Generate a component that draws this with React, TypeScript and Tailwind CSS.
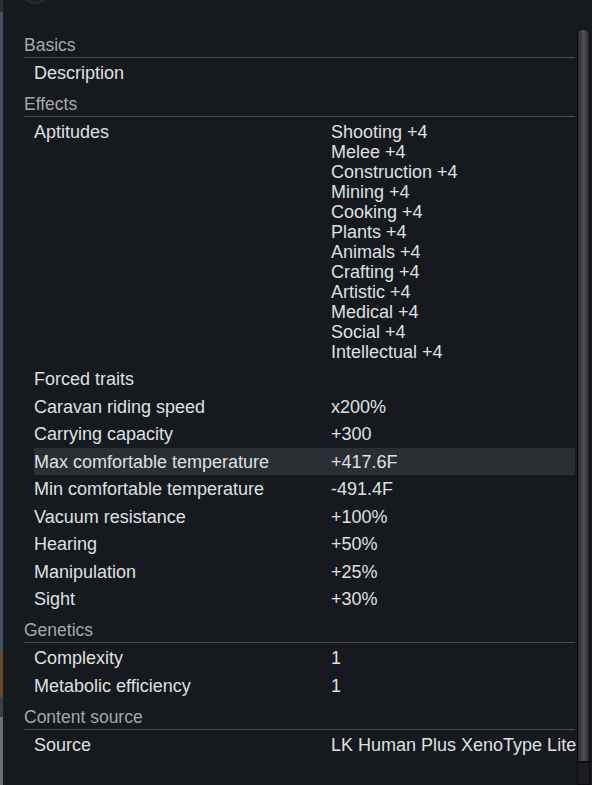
const aptitudes = [
  'Shooting +4',
  'Melee +4',
  'Construction +4',
  'Mining +4',
  'Cooking +4',
  'Plants +4',
  'Animals +4',
  'Crafting +4',
  'Artistic +4',
  'Medical +4',
  'Social +4',
  'Intellectual +4',
]

type Stat = { label: string; value?: string; highlight?: boolean }

const effectStats: Stat[] = [
  { label: 'Forced traits' },
  { label: 'Caravan riding speed', value: 'x200%' },
  { label: 'Carrying capacity', value: '+300' },
  { label: 'Max comfortable temperature', value: '+417.6F', highlight: true },
  { label: 'Min comfortable temperature', value: '-491.4F' },
  { label: 'Vacuum resistance', value: '+100%' },
  { label: 'Hearing', value: '+50%' },
  { label: 'Manipulation', value: '+25%' },
  { label: 'Sight', value: '+30%' },
]

function SectionHeader({ title }: { title: string }) {
  return (
    <div className="h-[31.5px] pt-[6.25px]">
      <div className="border-b border-[#4b4d51] pb-[1px] text-[17.5px] leading-[22px] text-[#a6a8ab]">
        {title}
      </div>
    </div>
  )
}

function Row({ label, value, highlight }: Stat) {
  return (
    <div
      className={`ml-[10px] flex h-[27.5px] items-center text-[18px] leading-[20px] text-[#dfe0e1] ${
        highlight ? 'bg-[#2b2e32]' : ''
      }`}
    >
      <div className="w-[297px] shrink-0">{label}</div>
      {value && <div className="whitespace-nowrap">{value}</div>}
    </div>
  )
}

export default function App() {
  return (
    <div
      className="flex h-[785px] w-[592px] overflow-hidden bg-[#16191d]"
      style={{ fontFamily: '"Liberation Sans", Arial, sans-serif' }}
    >
      <div className="flex w-[3px] shrink-0 flex-col bg-[#4a5160]">
        <div className="h-[12px] bg-[#2a2d33]" />
        <div className="h-[640px]" />
        <div className="h-[45px] bg-[#6a4a2a]" />
        <div className="h-[20px] bg-[#3a3f48]" />
        <div className="flex-1 bg-[#6b7079]" />
      </div>

      <div className="relative w-[572px] shrink-0 pl-[21px] pt-[27.75px]">
        <div className="absolute left-[19px] top-[-23px] h-[27px] w-[27px] rounded-full bg-[#15181a] shadow-[inset_0_-2px_3px_#2c3a36]" />

        <SectionHeader title="Basics" />
        <Row label="Description" />

        <SectionHeader title="Effects" />
        <div className="ml-[10px] flex h-[247px] pt-[3.75px] text-[18px] leading-[20px] text-[#dfe0e1]">
          <div className="w-[297px] shrink-0">Aptitudes</div>
          <div className="flex flex-col">
            {aptitudes.map((a) => (
              <div key={a} className="whitespace-nowrap">
                {a}
              </div>
            ))}
          </div>
        </div>
        {effectStats.map((s) => (
          <Row key={s.label} {...s} />
        ))}

        <SectionHeader title="Genetics" />
        <Row label="Complexity" value="1" />
        <Row label="Metabolic efficiency" value="1" />

        <SectionHeader title="Content source" />
        <Row label="Source" value="LK Human Plus XenoType Lite" />
      </div>

      <div className="ml-[2px] flex w-[13px] shrink-0 flex-col pt-[29px]">
        <div className="h-[733px] rounded-t-[5px] border border-[#0c0d0f] bg-gradient-to-r from-[#2c2d2f] via-[#505153] to-[#2a2b2d]" />
        <div className="flex-1 border border-[#0c0d0f] bg-[#1b1d20]" />
      </div>
      <div className="flex-1 bg-[#16191d]" />
    </div>
  )
}
